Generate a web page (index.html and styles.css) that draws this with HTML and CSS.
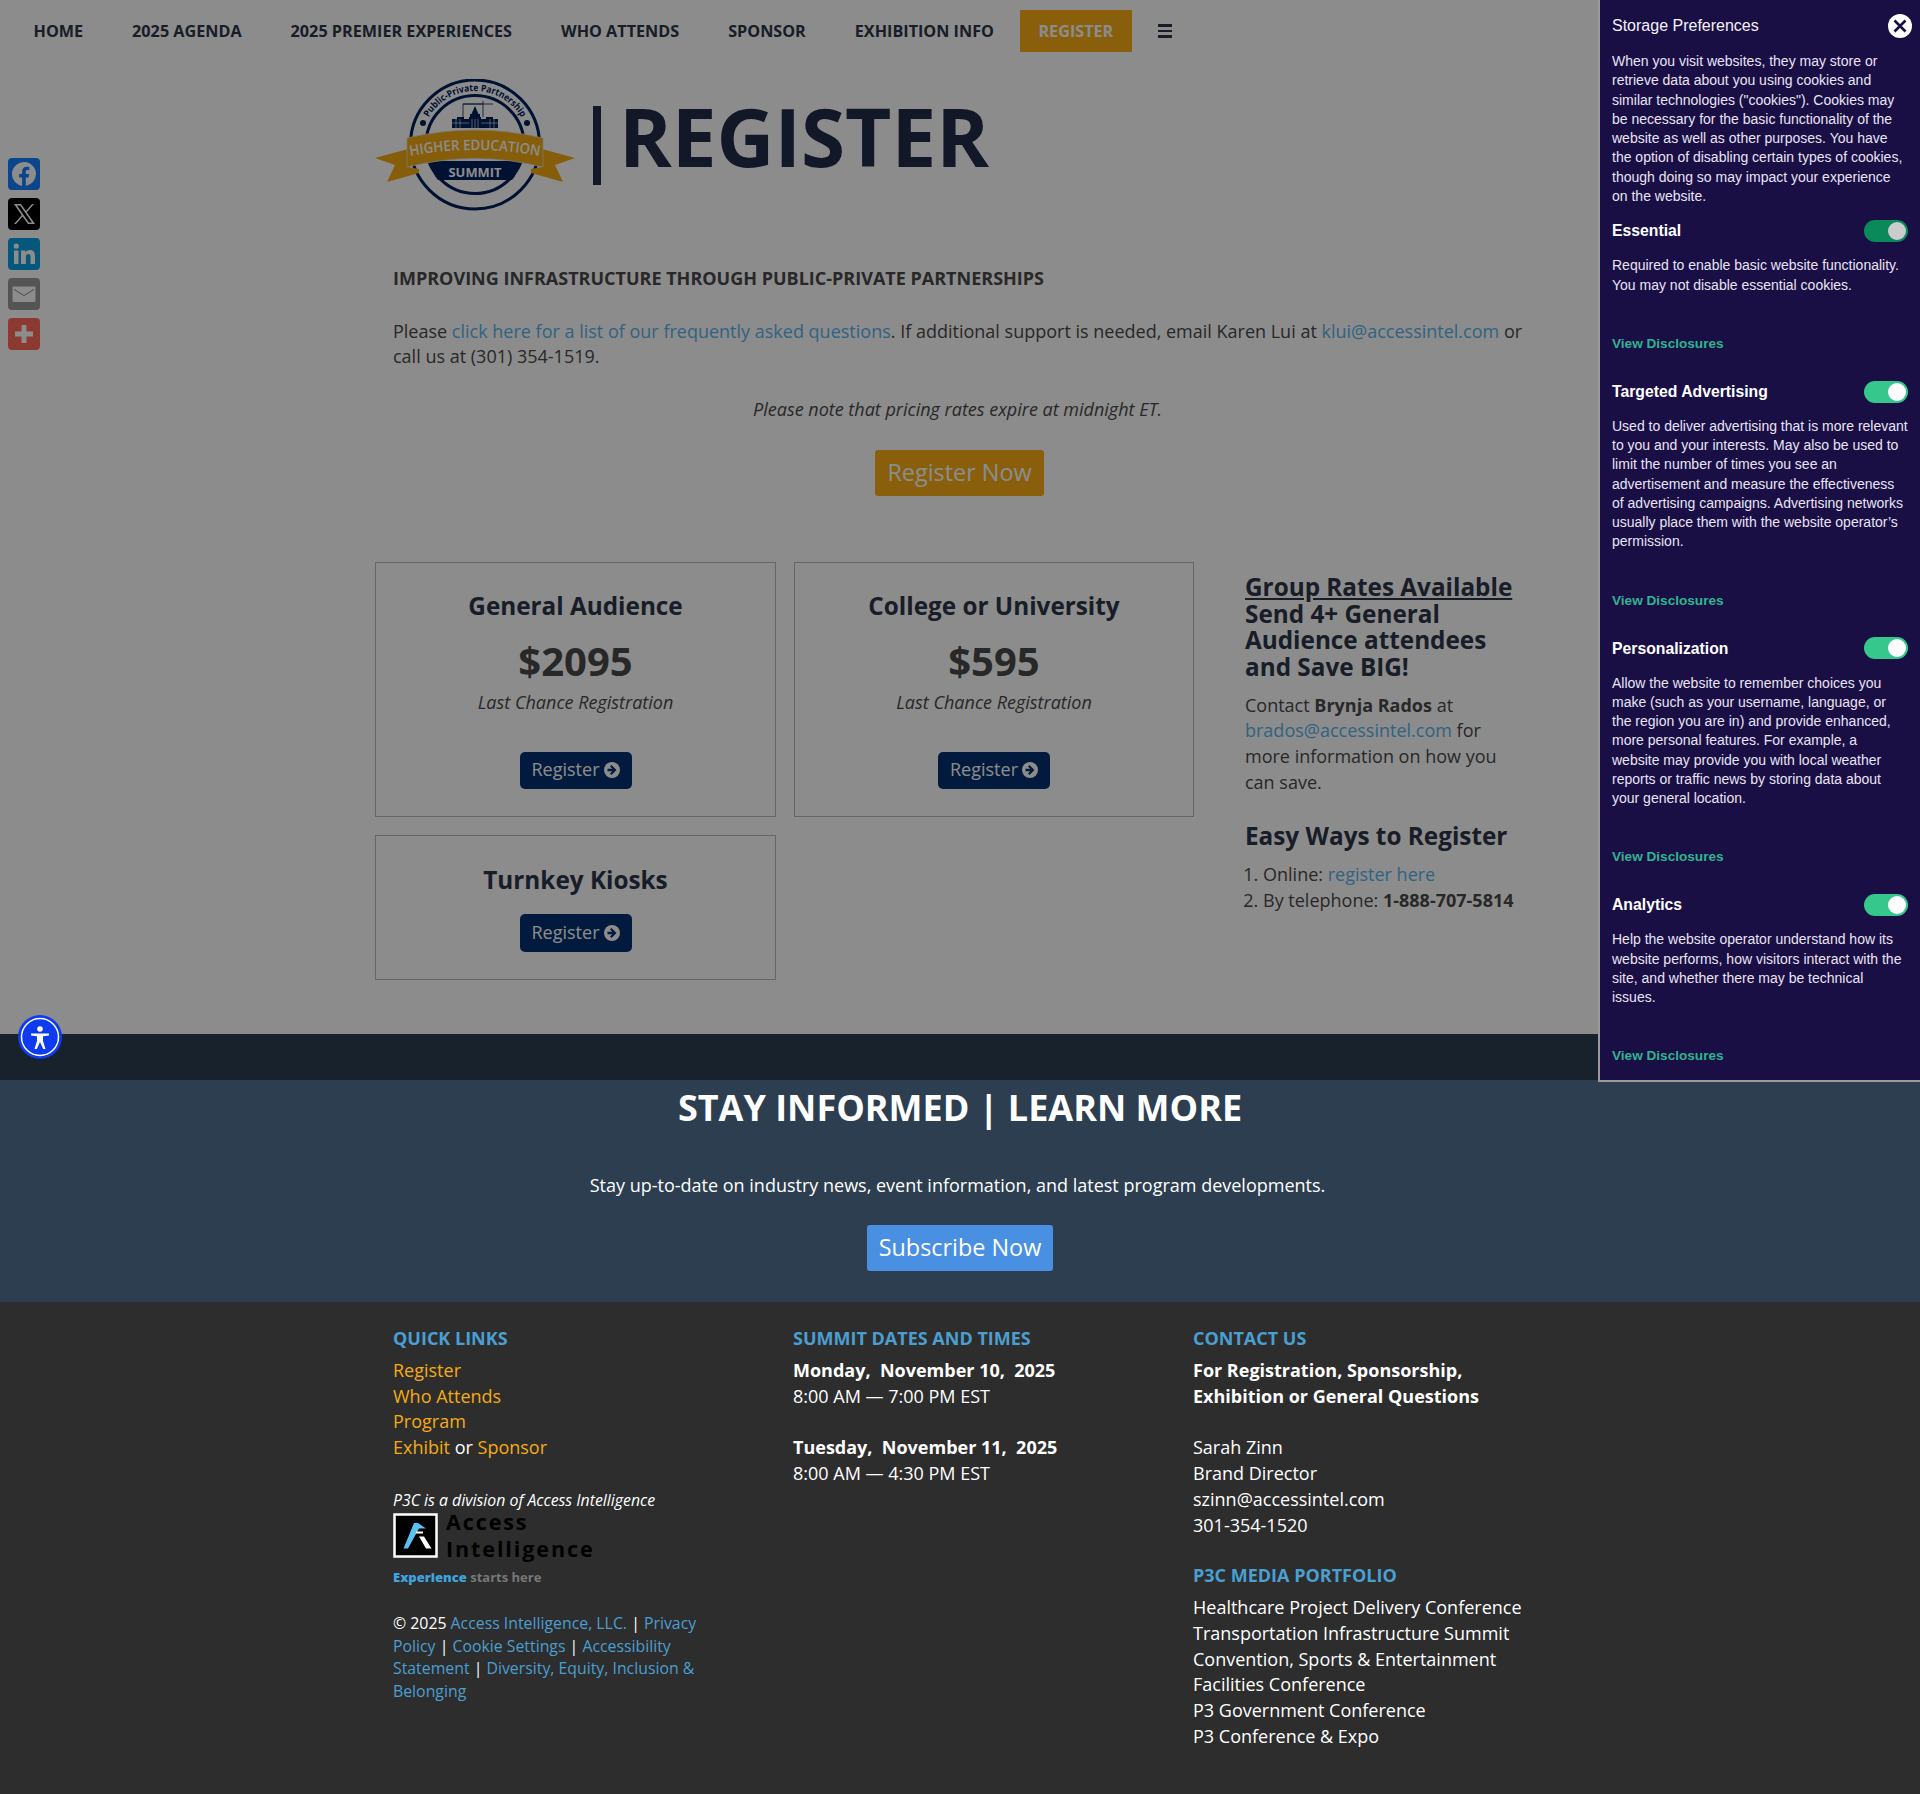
FILE: index.html
```html
<!DOCTYPE html>
<html lang="en">
  <head>
    <meta charset="UTF-8" />
    <title>Register | Higher Education Summit</title>
    <link rel="stylesheet" href="styles.css">
  </head>
  <body>
    <!-- Top Nav -->
    <nav class="top-nav">
      <a href="#">HOME</a>
      <a href="#">2025 AGENDA</a>
      <a href="#">2025 PREMIER EXPERIENCES</a>
      <a href="#">WHO ATTENDS</a>
      <a href="#">SPONSOR</a>
      <a href="#">EXHIBITION INFO</a>
      <a href="#" class="nav-register">REGISTER</a>
      <span class="nav-burger"><i></i><i></i><i></i></span>
    </nav>

    <!-- Share Buttons -->
    <div class="share-bar">
      <a class="share share-fb" href="#">
        <svg viewBox="0 0 32 32"><path fill="#fff" d="M28 16a12 12 0 1 0-13.900 11.900v-8.400h-3V16h3v-2.600c0-3 1.800-4.700 4.500-4.700 1.300 0 2.700.2 2.700.2v3h-1.500c-1.500 0-2 .9-2 1.900V16h3.300l-.5 3.500h-2.800v8.400A12 12 0 0 0 28 16z"/></svg>
      </a>
      <a class="share share-x" href="#">
        <svg viewBox="0 0 32 32"><path fill="#fff" fill-rule="evenodd" d="M6 6h7l5 7 6-7h2l-7.200 8.300L27 26h-7l-5.400-7.500L8 26H6l7.700-8.800zM9 7.500l11.800 17h3.200L12.200 7.500z"/></svg>
      </a>
      <a class="share share-in" href="#">
        <svg viewBox="0 0 32 32"><path fill="#fff" d="M6 12.500h4.500V26H6zM8.250 5.500a2.600 2.600 0 1 1 0 5.200 2.600 2.600 0 0 1 0-5.200zM13 12.500h4.300v1.900c.7-1.200 2.200-2.300 4.400-2.300 4.600 0 5.300 3 5.300 6.900V26h-4.500v-6.200c0-1.600 0-3.700-2.200-3.700s-2.400 1.700-2.400 3.500V26H13z"/></svg>
      </a>
      <a class="share share-mail" href="#">
        <svg viewBox="0 0 32 32"><path fill="#fff" fill-rule="evenodd" d="M5.500 8.500h21a1 1 0 0 1 1 1v13.500a1 1 0 0 1-1 1h-21a1 1 0 0 1-1-1V9.500a1 1 0 0 1 1-1zm.5 2.300v1.100L16 18.200l10-6.300v-1.100L16 17z"/></svg>
      </a>
      <a class="share share-add" href="#">
        <svg viewBox="0 0 32 32"><path fill="#fff" d="M13.500 7h5v6.500H25v5h-6.500V25h-5v-6.500H7v-5h6.500z"/></svg>
      </a>
    </div>

    <!-- Register Content -->
    <main class="page">
      <header class="page-head">
        <svg class="summit-logo" viewBox="0 0 200 132">
          <defs>
            <path id="logo-arc" d="M46 66 A54 54 0 0 1 154 66"/>
            <path id="logo-band" d="M35 77 Q100 65 165 77"/>
          </defs>
          <circle cx="100" cy="65.500" r="64.500" fill="#fff" stroke="#00205c" stroke-width="3"/>
          <circle cx="100" cy="65.500" r="49" fill="#fff" stroke="#00205c" stroke-width="3"/>
          <text class="logo-arc-text"><textPath href="#logo-arc" startOffset="50%" text-anchor="middle" textLength="112" lengthAdjust="spacingAndGlyphs">Public-Private Partnership</textPath></text>
          <circle cx="48" cy="44" r="3" fill="#00205c"/>
          <circle cx="152" cy="44" r="3" fill="#00205c"/>
          <!-- crane and campus buildings -->
          <path fill="none" stroke="#00205c" stroke-width=".8" d="M88 38V25H118M108 22V38M88 25H108"/>
          <path fill="#00205c" d="M77 49v-9h5v-2h7v2h5v-2h1v-3h1.500l3.500-8 3.500 8H105v3h1v2h5v-2h7v2h5v9z"/>
          <path stroke="#fff" stroke-width=".6" d="M81 40v9M85 40v9M115 40v9M119 40v9M77 44h17M106 44h17M97 40v9M100 40v9M103 40v9"/>
          <!-- ribbon -->
          <path fill="#00205c" d="M55 82 H145 Q142 96 137 101 H63 Q58 96 55 82z"/>
          <path fill="#f5ab12" d="M0 79 L33 70 V88 L44 90 V94 L12 103 L20 86z"/>
          <path fill="#f5ab12" d="M200 79 L167 70 V88 L156 90 V94 L188 103 L180 86z"/>
          <path fill="#f5ab12" stroke="#ddd" stroke-width=".8" d="M32 59 Q100 43 168 59 V88 Q100 71 32 88z"/>
          <text class="logo-band-text"><textPath href="#logo-band" startOffset="50%" text-anchor="middle" textLength="130" lengthAdjust="spacingAndGlyphs">HIGHER EDUCATION</textPath></text>
          <text class="logo-summit-text" x="100" y="97.500" textLength="53" lengthAdjust="spacingAndGlyphs">SUMMIT</text>
        </svg>
        <h1 class="page-title"><span class="title-bar"></span><span class="title-text">REGISTER</span></h1>
      </header>

      <section class="intro">
        <p class="tagline">IMPROVING INFRASTRUCTURE THROUGH PUBLIC-PRIVATE PARTNERSHIPS</p>
        <p>Please <a href="#">click here for a list of our frequently asked questions</a>. If additional support is needed, email Karen Lui at <a href="#">klui@accessintel.com</a> or call us at (301) 354-1519.</p>
        <p class="note">Please note that pricing rates expire at midnight ET.</p>
        <div class="center"><a href="#" class="btn-gold">Register Now</a></div>
      </section>

      <div class="rates">
        <div class="cards">
          <div class="card">
            <h3>General Audience</h3>
            <div class="price">$2095</div>
            <div class="price-note">Last Chance Registration</div>
            <a href="#" class="btn-navy">Register <svg class="go" viewBox="0 0 16 16"><circle cx="8" cy="8" r="8" fill="#fff"/><path class="go-arrow" d="M7.500 3l5 5-5 5-1.500-1.500 2.300-2.300H3.500V6.800h4.800L6 4.500z"/></svg></a>
          </div>
          <div class="card">
            <h3>College or University</h3>
            <div class="price">$595</div>
            <div class="price-note">Last Chance Registration</div>
            <a href="#" class="btn-navy">Register <svg class="go" viewBox="0 0 16 16"><circle cx="8" cy="8" r="8" fill="#fff"/><path class="go-arrow" d="M7.500 3l5 5-5 5-1.500-1.500 2.300-2.300H3.500V6.800h4.800L6 4.500z"/></svg></a>
          </div>
          <div class="card card-short">
            <h3>Turnkey Kiosks</h3>
            <a href="#" class="btn-navy">Register <svg class="go" viewBox="0 0 16 16"><circle cx="8" cy="8" r="8" fill="#fff"/><path class="go-arrow" d="M7.500 3l5 5-5 5-1.500-1.500 2.300-2.300H3.500V6.800h4.800L6 4.500z"/></svg></a>
          </div>
        </div>
        <aside class="rates-side">
          <h3 class="group-title"><u>Group Rates Available</u><br>Send 4+ General Audience attendees and Save BIG!</h3>
          <p>Contact <b>Brynja Rados</b> at <a href="#">brados@accessintel.com</a> for more information on how you can save.</p>
          <h3 class="ways-title">Easy Ways to Register</h3>
          <ol>
            <li>Online: <a href="#">register here</a></li>
            <li>By telephone: <b>1-888-707-5814</b></li>
          </ol>
        </aside>
      </div>
    </main>

    <!-- Stay Informed -->
    <section class="stay">
      <h2>STAY INFORMED | LEARN MORE</h2>
      <p>Stay up-to-date on industry news, event information, and latest program developments.</p>
      <a href="#" class="btn-blue">Subscribe Now</a>
    </section>

    <!-- Footer -->
    <footer class="footer">
      <div class="footer-col">
        <h4>QUICK LINKS</h4>
        <div class="quick-links">
          <a href="#">Register</a><br>
          <a href="#">Who Attends</a><br>
          <a href="#">Program</a><br>
          <a href="#">Exhibit</a> or <a href="#">Sponsor</a>
        </div>
        <p class="division">P3C is a division of Access Intelligence</p>
        <div class="ai-logo">
          <svg class="ai-mark" viewBox="0 0 45 45">
            <rect x="1.500" y="1.500" width="42" height="42" fill="#000" stroke="#fff" stroke-width="2.500"/>
            <path fill="#5cc0f0" d="M10.500 35.500 L21 10 H25 L33 15.500 H26 L15 35.500z"/>
            <path fill="#fff" d="M23 18.500 H30 V20.500 H23z M26 23.500 H31 L38.500 35.500 H33z"/>
          </svg>
          <div class="ai-name">Access<br>Intelligence</div>
        </div>
        <div class="ai-tag"><b>Experience</b> <span>starts here</span></div>
        <p class="legal">© 2025 <a href="#">Access Intelligence, LLC.</a> | <a href="#">Privacy Policy</a> | <a href="#">Cookie Settings</a> | <a href="#">Accessibility Statement</a> | <a href="#">Diversity, Equity, Inclusion &amp; Belonging</a></p>
      </div>
      <div class="footer-col">
        <h4>SUMMIT DATES AND TIMES</h4>
        <p><b>Monday,&nbsp; November 10,&nbsp; 2025</b><br>8:00 AM — 7:00 PM EST</p>
        <p><b>Tuesday,&nbsp; November 11,&nbsp; 2025</b><br>8:00 AM — 4:30 PM EST</p>
      </div>
      <div class="footer-col">
        <h4>CONTACT US</h4>
        <p><b>For Registration, Sponsorship,<br>Exhibition or General Questions</b></p>
        <p>Sarah Zinn<br>Brand Director<br>szinn@accessintel.com<br>301-354-1520</p>
        <h4 class="portfolio-title">P3C MEDIA PORTFOLIO</h4>
        <p>Healthcare Project Delivery Conference<br>Transportation Infrastructure Summit<br>Convention, Sports &amp; Entertainment<br>Facilities Conference<br>P3 Government Conference<br>P3 Conference &amp; Expo</p>
      </div>
    </footer>

    <!-- Dim layer behind the storage panel -->
    <div class="dim"></div>

    <!-- Accessibility Button -->
    <a class="a11y-btn" href="#">
      <svg viewBox="0 0 44 44">
        <circle cx="22" cy="22" r="18.500" fill="none" stroke="#fff" stroke-width="1.500"/>
        <circle cx="22" cy="14" r="2.800" fill="#fff"/>
        <path fill="#fff" d="M13 18.500h18v2l-6 .8v4.700l2.500 8h-2.300L22 27l-3.200 7h-2.300l2.500-8v-4.700l-6-.8z"/>
      </svg>
    </a>

    <!-- Storage Preferences -->
    <aside class="storage">
      <div class="storage-head">
        <span>Storage Preferences</span>
        <span class="storage-close"><svg viewBox="0 0 24 24"><path stroke="#1a0f45" stroke-width="2.600" d="M6.500 6.500l11 11M17.500 6.500l-11 11"/></svg></span>
      </div>
      <p class="storage-intro">When you visit websites, they may store or retrieve data about you using cookies and similar technologies ("cookies"). Cookies may be necessary for the basic functionality of the website as well as other purposes. You have the option of disabling certain types of cookies, though doing so may impact your experience on the website.</p>

      <div class="pref">
        <div class="pref-head"><b>Essential</b><span class="toggle toggle-locked"></span></div>
        <p>Required to enable basic website functionality. You may not disable essential cookies.</p>
        <a href="#">View Disclosures</a>
      </div>
      <div class="pref">
        <div class="pref-head"><b>Targeted Advertising</b><span class="toggle"></span></div>
        <p>Used to deliver advertising that is more relevant to you and your interests. May also be used to limit the number of times you see an advertisement and measure the effectiveness of advertising campaigns. Advertising networks usually place them with the website operator’s permission.</p>
        <a href="#">View Disclosures</a>
      </div>
      <div class="pref">
        <div class="pref-head"><b>Personalization</b><span class="toggle"></span></div>
        <p>Allow the website to remember choices you make (such as your username, language, or the region you are in) and provide enhanced, more personal features. For example, a website may provide you with local weather reports or traffic news by storing data about your general location.</p>
        <a href="#">View Disclosures</a>
      </div>
      <div class="pref">
        <div class="pref-head"><b>Analytics</b><span class="toggle"></span></div>
        <p>Help the website operator understand how its website performs, how visitors interact with the site, and whether there may be technical issues.</p>
        <a href="#">View Disclosures</a>
      </div>
    </aside>
  </body>
</html>
```

FILE: styles.css
```css
/* Base Styles */
* {
  box-sizing: border-box;
}

body {
  margin: 0;
  background: #fff;
  color: #4a4a4a;
  font-family: "Open Sans", sans-serif;
  font-size: 18px;
  line-height: 25.7px;
  position: relative;
}

a {
  color: #5ab4ec;
  text-decoration: none;
}

p {
  margin: 0;
}

/* Top Nav */
.top-nav {
  display: flex;
  align-items: center;
  height: 62px;
  padding-left: 9px;
  font-size: 16.200px;
  font-weight: 700;
}

.top-nav a {
  display: block;
  padding: 0 24.500px;
  line-height: 42px;
  color: #2c3648;
}

.top-nav .nav-register {
  margin-left: 1.500px;
  padding: 0 18.500px;
  background: #f9ae16;
  color: #fff;
}

.nav-burger {
  margin-left: 26px;
  display: flex;
  flex-direction: column;
  gap: 3px;
  width: 14px;
}

.nav-burger i {
  display: block;
  height: 2.500px;
  background: #2c3648;
}

/* Share Buttons */
.share-bar {
  position: absolute;
  top: 158px;
  left: 8px;
  display: flex;
  flex-direction: column;
  gap: 8px;
}

.share {
  display: block;
  width: 32px;
  height: 32px;
  border-radius: 4px;
}

.share svg {
  display: block;
}

.share-fb { background: #1580ff; }
.share-x { background: #000; }
.share-in { background: #0a9fe0; }
.share-mail { background: #999; }
.share-add { background: #ff6b5a; }

/* Page Head */
.page {
  height: 972px;
  padding-left: 375px;
}

.page-head {
  display: flex;
  align-items: flex-start;
  height: 150px;
  padding-top: 17px;
}

.summit-logo {
  width: 200px;
  height: 132px;
  flex: none;
}

.logo-arc-text {
  font-size: 9.500px;
  font-weight: 700;
  fill: #00205c;
}

.logo-band-text {
  font-size: 14.500px;
  font-weight: 600;
  fill: #fff;
}

.logo-summit-text {
  font-size: 13px;
  font-weight: 700;
  fill: #fff;
  text-anchor: middle;
}

.page-title {
  display: flex;
  align-items: flex-start;
  margin: 0 0 0 18px;
  font-size: 80px;
  font-weight: 700;
  line-height: 106px;
  color: #222c48;
}

.title-bar {
  width: 8px;
  height: 79px;
  margin: 27px 18px 0 0;
  background: #222c48;
}

.title-text {
  margin-top: 4px;
}

/* Intro */
.intro {
  width: 1150px;
  padding: 54px 0 0 18px;
}

.tagline {
  font-weight: 700;
  margin-bottom: 27px;
}

.note {
  margin-top: 27px;
  padding-right: 3px;
  text-align: center;
  font-style: italic;
}

.center {
  display: flex;
  justify-content: center;
  margin-top: 27px;
}

.btn-gold {
  display: block;
  margin-left: 1px;
  padding: 0 12px;
  height: 46px;
  line-height: 44px;
  font-size: 23.400px;
  color: #fff;
  background: #f9ae16;
  border-radius: 3px;
}

/* Rate Cards */
.rates {
  display: flex;
  margin-top: 66px;
}

.cards {
  display: grid;
  grid-template-columns: 401px 400px;
  gap: 18px;
  width: 819px;
  align-content: start;
}

.card {
  height: 255px;
  border: 1px solid #bbb;
  text-align: center;
  padding-top: 26px;
}

.card h3 {
  margin: 0;
  font-size: 24.300px;
  font-weight: 700;
  line-height: 33px;
  color: #2c3648;
}

.price {
  margin-top: 12px;
  font-size: 40px;
  font-weight: 700;
  line-height: 54px;
}

.price-note {
  font-style: italic;
  margin-top: 2px;
  height: 62px;
}

.card-short {
  height: 145px;
  grid-column: 1;
  padding-top: 27px;
}

.card-short .btn-navy {
  margin-top: 18px;
  height: 38px;
}

.btn-navy {
  display: inline-flex;
  align-items: center;
  gap: 4px;
  height: 37px;
  padding: 0 12px;
  background: #04306f;
  border-radius: 5px;
  color: #fff;
}

.go {
  width: 16px;
  height: 16px;
}

.go-arrow {
  fill: #04306f;
}

/* Side Column */
.rates-side {
  width: 275px;
  margin-left: 51px;
  padding-top: 12px;
}

.rates-side h3 {
  margin: 0;
  font-size: 24.300px;
  font-weight: 700;
  line-height: 26.700px;
  color: #2c3648;
}

.rates-side p {
  margin-top: 12px;
}

.ways-title {
  padding-top: 28px;
}

.rates-side ol {
  margin: 12px 0 0;
  padding-left: 18px;
}

/* Stay Informed */
.stay {
  height: 268px;
  background: #2c3e50;
  color: #fff;
  text-align: center;
  padding-top: 51px;
}

.stay h2 {
  margin: 0;
  font-size: 36px;
  font-weight: 700;
  line-height: 46px;
}

.stay p {
  margin-top: 42px;
  padding-right: 5px;
}

.btn-blue {
  display: inline-block;
  margin-top: 26px;
  padding: 0 11.500px;
  height: 46px;
  line-height: 44px;
  font-size: 23.400px;
  color: #fff;
  background: #4a90e2;
  border-radius: 3px;
}

/* Footer */
.footer {
  display: grid;
  grid-template-columns: 400px 400px 360px;
  height: 492px;
  padding: 23px 0 0 393px;
  background: #2d2d2d;
  color: #fff;
}

.footer a,
.footer h4 {
  color: #4b9fd0;
}

.footer h4 {
  margin: 0 0 7px;
  font-size: 18px;
  font-weight: 700;
  line-height: 26px;
}

.footer-col {
  width: 320px;
}

.footer-col:last-child {
  width: 360px;
}

.footer-col p + p {
  margin-top: 26px;
}

.footer .quick-links a {
  color: #f5ab12;
}

.footer .division {
  margin-top: 28px;
  font-size: 15.840px;
  font-style: italic;
  line-height: 22px;
}

.ai-logo {
  display: flex;
  margin-top: 2px;
  height: 50px;
}

.ai-mark {
  width: 45px;
  height: 45px;
}

.ai-name {
  margin-left: 8px;
  margin-top: -5px;
  font-size: 21.500px;
  font-weight: 700;
  line-height: 27px;
  letter-spacing: 1.900px;
  color: #000;
}

.ai-tag {
  font-size: 13px;
  line-height: 20px;
  font-weight: 700;
  margin-top: 4px;
}

.ai-tag b {
  color: #3ea4dc;
}

.ai-tag span {
  color: #777;
}

.footer .legal {
  margin-top: 25px;
  font-size: 15.840px;
  line-height: 22.800px;
}

.portfolio-title {
  margin-top: 24px !important;
}

/* Dim Layer */
.dim {
  position: absolute;
  top: 0;
  left: 0;
  width: 100%;
  height: 1080px;
  background: rgba(0, 0, 0, 0.45);
}

/* Accessibility Button */
.a11y-btn {
  position: absolute;
  top: 1015px;
  left: 18px;
  width: 44px;
  height: 44px;
  border-radius: 50%;
  background: #0e3af0;
}

.a11y-btn svg {
  display: block;
}

/* Storage Preferences */
.storage {
  position: absolute;
  top: 0;
  right: 0;
  width: 320px;
  height: 1080px;
  padding: 0 12px;
  background: #1a0f45;
  color: #e8e4f4;
  font-family: "Liberation Sans", Arial, sans-serif;
  font-size: 14px;
  line-height: 19.250px;
  box-shadow: 0 0 0 2px #9a9a9a;
}

.storage-head {
  display: flex;
  justify-content: space-between;
  align-items: center;
  height: 52px;
  font-size: 16px;
  color: #f4f2fa;
}

.storage-close {
  width: 24px;
  height: 24px;
  border-radius: 50%;
  background: #fff;
  margin-right: -4px;
}

.storage-close svg {
  display: block;
}

.storage-intro {
  margin-bottom: 14px;
}

.pref {
  margin-bottom: 27.400px;
}

.pref-head {
  display: flex;
  justify-content: space-between;
  align-items: center;
  height: 22px;
  font-size: 15.750px;
  color: #fff;
}

.toggle {
  position: relative;
  width: 44px;
  height: 22px;
  border-radius: 11px;
  background: #36c78d;
}

.toggle::after {
  content: "";
  position: absolute;
  top: 2px;
  right: 2px;
  width: 18px;
  height: 18px;
  border-radius: 50%;
  background: #fff;
}

.toggle-locked {
  background: #0a8a5a;
}

.toggle-locked::after {
  background: #ccc;
}

.pref p {
  margin-top: 14.400px;
}

.pref a {
  display: block;
  margin-top: 39px;
  font-size: 13.600px;
  font-weight: 700;
  color: #2fb48f;
}
```
